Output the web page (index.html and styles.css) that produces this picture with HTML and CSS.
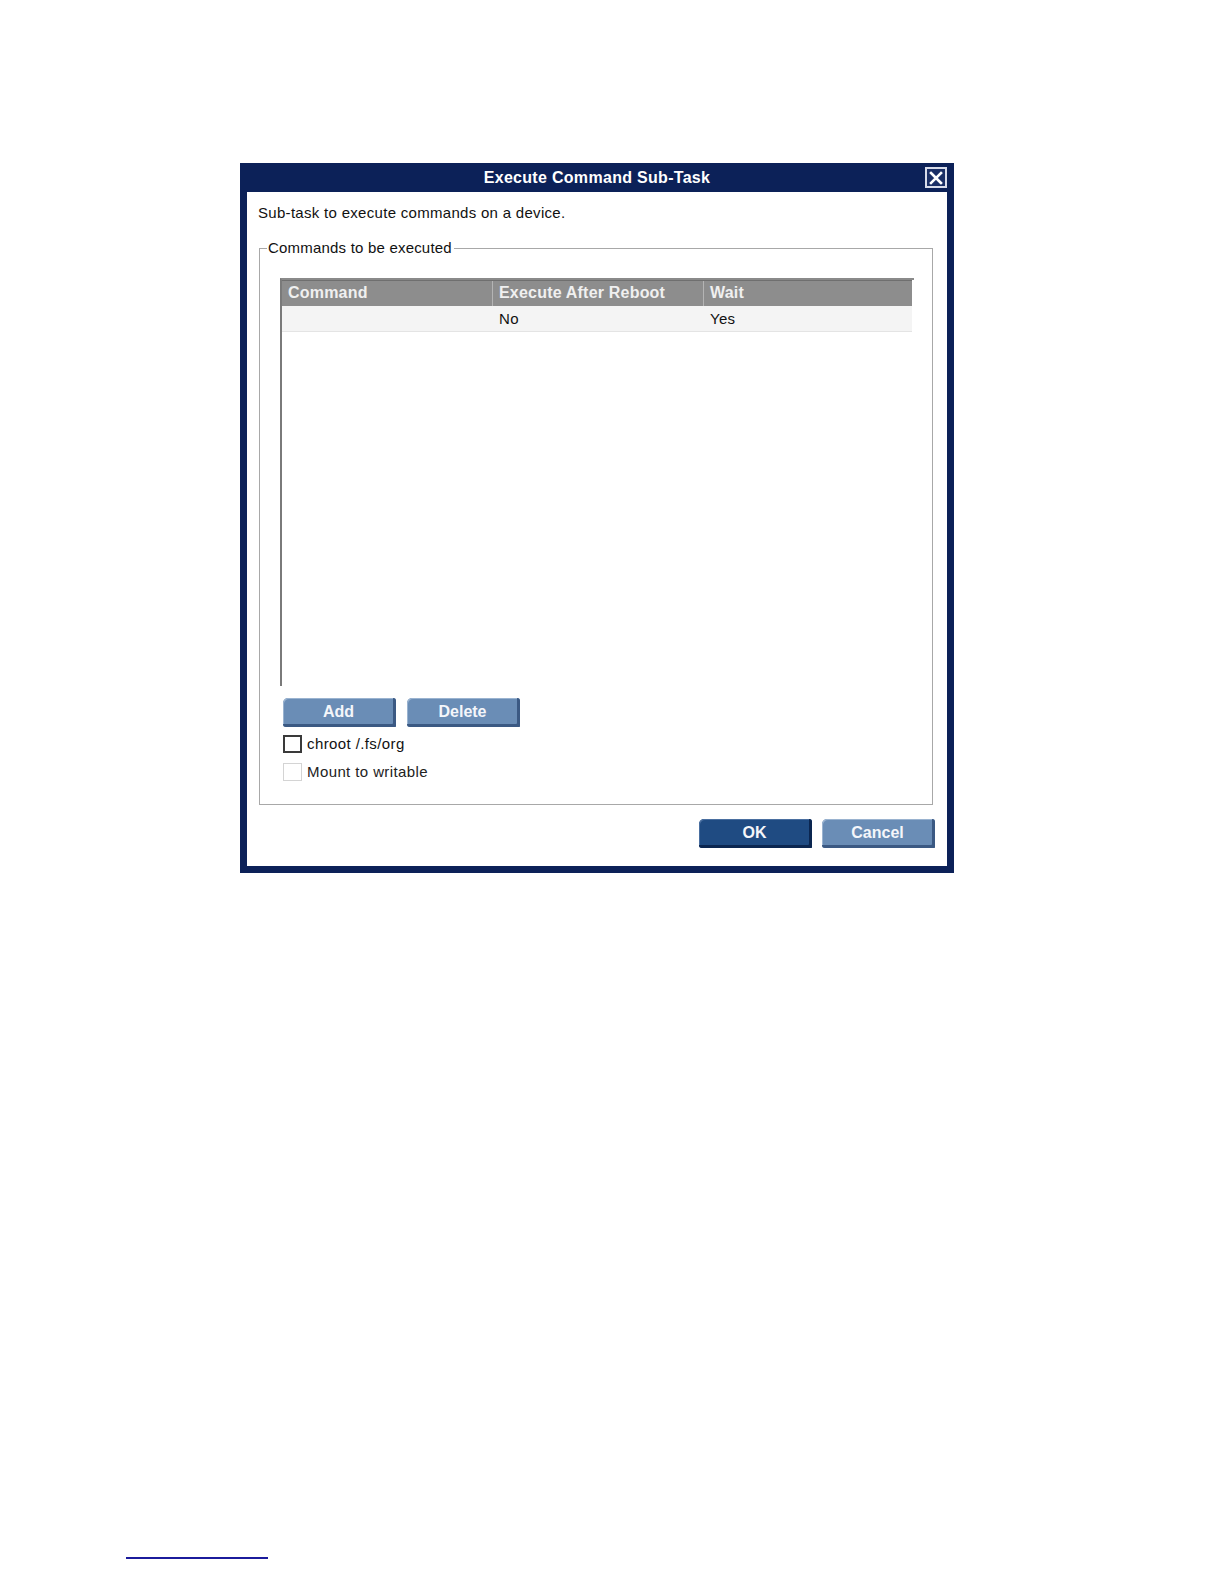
FILE: index.html
```html
<!DOCTYPE html>
<html>
<head>
<meta charset="utf-8">
<title>Execute Command Sub-Task</title>
<link rel="stylesheet" href="styles.css">
</head>
<body>
<div class="page">
  <div class="dialog">
    <div class="titlebar">
      <span class="title">Execute Command Sub-Task</span>
      <span class="close">
        <svg width="14" height="14" viewBox="0 0 14 14"><path d="M2 2 L12 12 M12 2 L2 12" stroke="#ffffff" stroke-width="2.6" stroke-linecap="square"/></svg>
      </span>
    </div>
    <div class="content">
      <div class="desc">Sub-task to execute commands on a device.</div>
      <fieldset class="group">
        <legend class="legend">Commands to be executed</legend>
        <div class="grid">
          <div class="row head">
            <div class="cell c1">Command</div>
            <div class="cell c2">Execute After Reboot</div>
            <div class="cell c3">Wait</div>
          </div>
          <div class="row data">
            <div class="cell c1"></div>
            <div class="cell c2">No</div>
            <div class="cell c3">Yes</div>
          </div>
        </div>
        <div class="btnrow">
          <button class="btn light">Add</button>
          <button class="btn light">Delete</button>
        </div>
        <label class="check"><span class="box"></span><span>chroot /.fs/org</span></label>
        <label class="check disabled"><span class="box"></span><span>Mount to writable</span></label>
      </fieldset>
      <div class="footer">
        <button class="btn dark">OK</button>
        <button class="btn light">Cancel</button>
      </div>
    </div>
  </div>
  <div class="rule"></div>
</div>
</body>
</html>
```

FILE: styles.css
```css
html, body {
  margin: 0;
  padding: 0;
  background: #ffffff;
}
body {
  font-family: "Liberation Sans", Arial, sans-serif;
  color: #111111;
}
.page {
  position: relative;
  width: 1224px;
  height: 1584px;
  padding: 163px 0 0 240px;
  box-sizing: border-box;
}
.dialog {
  width: 714px;
  height: 710px;
  box-sizing: border-box;
  background: #0c2158;
  padding: 0 7px 7px 7px;
  display: flex;
  flex-direction: column;
}
.titlebar {
  height: 29px;
  display: flex;
  align-items: center;
  justify-content: center;
  position: relative;
}
.title {
  color: #ffffff;
  font-weight: bold;
  font-size: 16px;
  letter-spacing: 0.3px;
}
.close {
  position: absolute;
  right: 0;
  top: 4px;
  width: 18px;
  height: 17px;
  border: 2px solid #d8dcea;
  display: flex;
  align-items: center;
  justify-content: center;
  background: #1a2f66;
}
.content {
  flex: 1;
  background: #ffffff;
  padding: 11px 14px 0 11px;
  display: flex;
  flex-direction: column;
}
.desc {
  font-size: 15px;
  line-height: 20px;
  letter-spacing: 0.3px;
}
.group {
  margin: 16px 0 0 1px;
  padding: 0 0 24px 20px;
  border: 1px solid #a8a8a8;
  height: 566px;
  box-sizing: border-box;
  min-width: 0;
}
.legend {
  font-size: 15px;
  line-height: 18px;
  padding: 0 2px 0 1px;
  margin-left: -13px;
  letter-spacing: 0.2px;
}
.grid {
  margin-top: 21px;
  width: 634px;
  height: 408px;
  box-sizing: border-box;
  border-top: 2px solid #8a8a8a;
  border-left: 2px solid #7a7a7a;
  background: #ffffff;
}
.row {
  display: flex;
  height: 25px;
  width: 630px;
}
.row.head {
  background: #8d8d8d;
  color: #f0f0f0;
  font-weight: bold;
  border-top: 1px solid #6f6f6f;
}
.row.data {
  background: #f4f4f4;
  border-bottom: 1px solid #e4e4e4;
  height: 25px;
}
.cell {
  font-size: 15px;
  line-height: 25px;
  padding-left: 6px;
  box-sizing: border-box;
  white-space: nowrap;
  letter-spacing: 0.3px;
}
.head .cell {
  border-right: 1px solid #b4b4b4;
  line-height: 24px;
  font-size: 16px;
  letter-spacing: 0.2px;
}
.head .c3 { border-right: none; }
.c1 { width: 211px; }
.c2 { width: 211px; }
.c3 { width: 208px; }
.btnrow {
  display: flex;
  gap: 11px;
  margin: 12px 0 0 3px;
}
.btn {
  width: 113px;
  height: 29px;
  border: none;
  border-radius: 5px 3px 1px 3px;
  font-family: "Liberation Sans", Arial, sans-serif;
  font-weight: bold;
  font-size: 16px;
  color: #f4f6fa;
  padding: 0 2px 2px 0;
  cursor: pointer;
}
.btn.light {
  background: #6a8db6;
  box-shadow: inset -3px -3px 0 #3b5983, inset 1px 1px 0 #9ab3d0;
}
.btn.dark {
  background: #1f4b82;
  box-shadow: inset -3px -3px 0 #0b2650, inset 1px 1px 0 #4a6fa0;
}
.check {
  display: flex;
  align-items: center;
  gap: 5px;
  font-size: 15px;
  margin-left: 3px;
  height: 19px;
  letter-spacing: 0.4px;
}
.btnrow + .check { margin-top: 7px; }
.check + .check { margin-top: 9px; }
.box {
  width: 19px;
  height: 18px;
  box-sizing: border-box;
  border: 2px solid #3a3a3a;
  background: #ffffff;
  flex: none;
}
.check.disabled .box {
  border: 1px solid #d4d4d4;
}
.check.disabled {
  color: #222222;
}
.footer {
  display: flex;
  justify-content: flex-end;
  gap: 10px;
  margin-top: 14px;
  margin-right: -2px;
}
.rule {
  position: absolute;
  left: 126px;
  top: 1557px;
  width: 142px;
  height: 2px;
  background: #1b1b9c;
}
```
